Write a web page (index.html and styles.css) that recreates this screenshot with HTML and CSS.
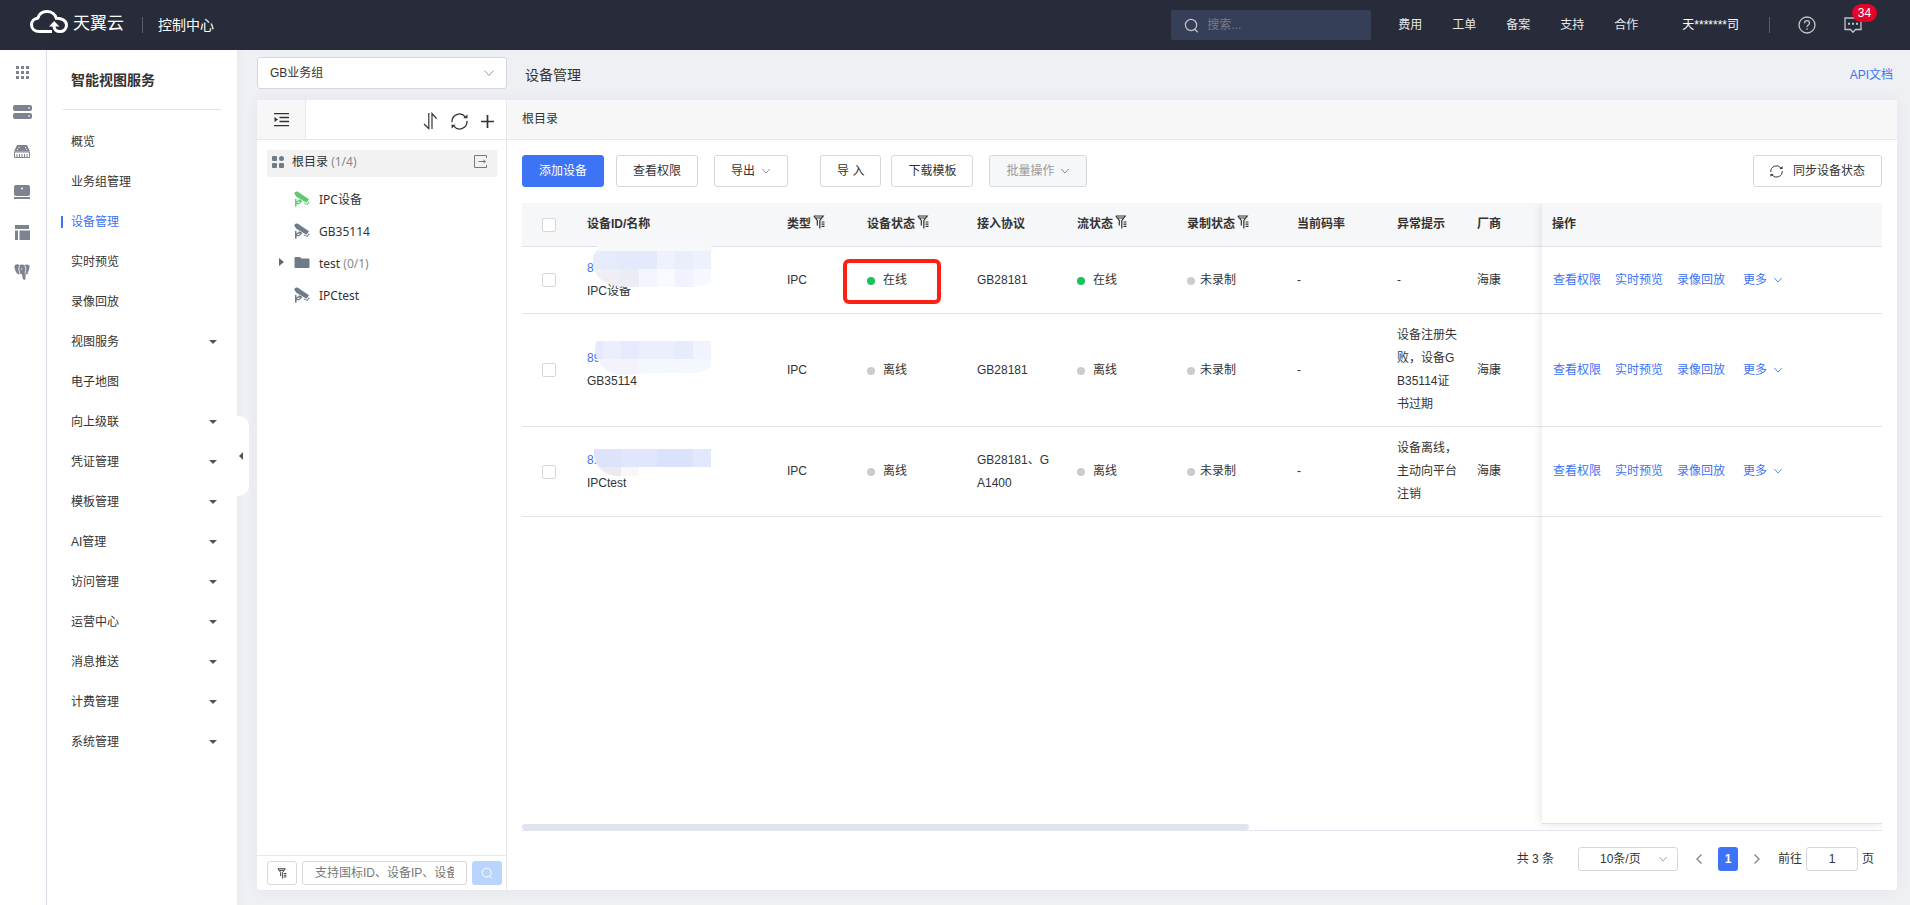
FILE: index.html
```html
<!DOCTYPE html>
<html lang="zh-CN">
<head>
    <meta charset="UTF-8">
    <meta name="viewport" content="width=device-width, initial-scale=1.0">
    <title>设备管理 - 智能视图服务</title>
    <link rel="stylesheet" href="styles.css">
</head>
<body>

<!-- 公用图标 -->
<svg class="symbols" aria-hidden="true">
    <symbol id="i-down" viewBox="0 0 12 12"><path d="M1.5 3.5 6 8.5l4.5-5" fill="none" stroke="currentColor"/></symbol>
    <symbol id="i-search" viewBox="0 0 16 16"><g fill="none" stroke="currentColor" stroke-width="1.3"><circle cx="7.5" cy="7.5" r="6"/><path d="m11.5 12 3.2 3.2"/></g></symbol>
    <symbol id="i-refresh" viewBox="0 0 16 16"><g fill="none" stroke="currentColor" stroke-width="1.2"><path d="M1 8.600A7 7 0 0 1 13.400 3.600M15 7.400A7 7 0 0 1 2.600 12.400"/></g><path d="M11.500 5h4V1.500zM4.500 11h-4v3.500z" fill="currentColor"/></symbol>
    <symbol id="i-filter" viewBox="0 0 12 14"><path d="M.8 1h9.400L6.800 5.500v8M.8 1l3.500 4.500V10.500M2.500 3h6M8.500 7h3M8.500 9.200h3M8.500 11.400h3" fill="none" stroke="currentColor" stroke-width="1.200"/></symbol>
    <symbol id="i-camera" viewBox="0 0 16 16"><g fill="currentColor"><circle cx="2.500" cy="2.500" r="2"/><path d="M.6 2 3.500.6 15 8.200l-2.500 3.600L2 5.600z"/><path d="M1 8h1.500v2.600L5.500 8.200 8.500 10l-3.200 3.200H2.500v2.500H1zM9.500 12.200l.6-.8 2.800 1.500 2-2.600.8.600-2.400 3.200z"/></g><path d="M3.800 10.800h2.600L4.800 12H3.200z" fill="#fff"/></symbol>
</svg>

<header class="topbar">
    <a class="logo" href="#">
        <svg width="38" height="24" viewBox="0 0 38 24">
            <path d="M22 21.500H9.500C4.500 21.500 1.500 18.500 1.500 14.800c0-3.600 2.600-6.300 6.300-6.600C9 4.300 12.600 1.600 17 1.600c4.500 0 8.300 2.700 9.300 6.700 5.700-.2 10.200 2.500 10.200 7 0 3.600-2.900 6.300-6.600 6.300-3.500 0-5.900-2.200-5.900-5.600" fill="none" stroke="#fff" stroke-width="3"/>
            <path d="M19 16.500 24.200 11l5.200 5.500z" fill="#fff"/>
        </svg>
        <span>天翼云</span>
    </a>
    <span class="split"></span>
    <span class="console-name">控制中心</span>

    <label class="top-search">
        <svg width="15" height="15"><use href="#i-search"/></svg>
        <input type="text" placeholder="搜索..." aria-label="搜索">
    </label>
    <nav class="top-nav">
        <a href="#">费用</a>
        <a href="#">工单</a>
        <a href="#">备案</a>
        <a href="#">支持</a>
        <a href="#">合作</a>
    </nav>
    <a class="account" href="#">天*******司</a>
    <span class="split"></span>
    <button class="top-icon" aria-label="帮助">
        <svg width="18" height="18" viewBox="0 0 18 18" fill="none" stroke="#c3c5cb" stroke-width="1.300"><circle cx="9" cy="9" r="8"/><path d="M6.500 7.200C6.500 5.600 7.600 4.700 9 4.700s2.500.9 2.500 2.300c0 1.800-2.500 2-2.500 4M9 12.300v1.500"/></svg>
    </button>
    <button class="top-icon message" aria-label="消息">
        <svg width="18" height="18" viewBox="0 0 18 18" fill="none" stroke="#c3c5cb" stroke-width="1.300"><path d="M1 2h16v11.500h-5.500L9 16.200l-2.500-2.700H1z"/><path d="M4 7.800h2M8 7.800h2M12 7.800h2" stroke-width="2"/></svg>
        <span class="badge">34</span>
    </button>
</header>

<div class="layout">
    <nav class="rail" aria-label="产品">
        <a href="#" aria-label="全部产品"><svg width="13" height="13" viewBox="0 0 13 13"><path d="M0 0h3v3H0zM5 0h3v3H5zM10 0h3v3h-3zM0 5h3v3H0zM5 5h3v3H5zM10 5h3v3h-3zM0 10h3v3H0zM5 10h3v3H5zM10 10h3v3h-3z"/></svg></a>
        <a href="#" aria-label="云主机"><svg width="19" height="14" viewBox="0 0 19 14"><rect width="19" height="6" rx="2"/><rect y="8" width="19" height="6" rx="2"/><path d="M15 2.500h2v1h-2zM15 10.500h2v1h-2z" fill="#fff"/></svg></a>
        <a href="#" aria-label="云硬盘"><svg width="18" height="14" viewBox="0 0 18 14"><path d="M4 0h10l3 6.500H1z"/><path d="M1.500 7h15v5.500h-15z" fill="none" stroke="#7e848f"/><path d="M4 9v3M6.500 9v3M9 9v3M11.500 9v3M14 9v3" stroke="#7e848f"/><path d="M5.500 2.500h1M12 2.500h1M4 4.500h1M13 4.500h1" stroke="#fff"/></svg></a>
        <a href="#" aria-label="物理机"><svg width="16" height="14" viewBox="0 0 16 14"><rect width="16" height="11" rx="2"/><path d="M0 12h16v2H0z"/><circle cx="8" cy="3.500" r="1" fill="#fff"/></svg></a>
        <a href="#" aria-label="控制台"><svg width="16" height="15" viewBox="0 0 16 15"><path d="M1 0h14v4H1zM1 5.500h3V15H1zM5.500 5.500H16V15H5.500z"/></svg></a>
        <a href="#" aria-label="数据库"><svg width="16" height="16" viewBox="0 0 16 16"><path d="M1 1Q3-.3 5.500 1 8-.2 10.500 1 13-.2 15.500 1.500q.5 4-2 7.500l1.500.5-3.500.8v5Q10 16.500 8.800 15L8 10.500 6 9.500 4.500 10.500Q1.500 9 .3 3z"/><path d="M5.500 1.500Q4 5 5.800 9.500M10.800 1.500q2 3.500.2 8M7 5h1.500" fill="none" stroke="#fff" stroke-width=".8"/></svg></a>
    </nav>

    <aside class="sidebar">
        <h2>智能视图服务</h2>
        <ul class="menu">
            <li><a href="#">概览</a></li>
            <li><a href="#">业务组管理</a></li>
            <li><a class="active" href="#">设备管理</a></li>
            <li><a href="#">实时预览</a></li>
            <li><a href="#">录像回放</a></li>
            <li><a class="has-sub" href="#">视图服务</a></li>
            <li><a href="#">电子地图</a></li>
            <li><a class="has-sub" href="#">向上级联</a></li>
            <li><a class="has-sub" href="#">凭证管理</a></li>
            <li><a class="has-sub" href="#">模板管理</a></li>
            <li><a class="has-sub" href="#">AI管理</a></li>
            <li><a class="has-sub" href="#">访问管理</a></li>
            <li><a class="has-sub" href="#">运营中心</a></li>
            <li><a class="has-sub" href="#">消息推送</a></li>
            <li><a class="has-sub" href="#">计费管理</a></li>
            <li><a class="has-sub" href="#">系统管理</a></li>
        </ul>
        <button class="collapse" aria-label="收起菜单"></button>
    </aside>

    <main class="content">
        <div class="page-head">
            <div class="select group-select">
                <select aria-label="业务组"><option>GB业务组</option></select>
                <svg width="12" height="12"><use href="#i-down"/></svg>
            </div>
            <h1>设备管理</h1>
            <a class="api-link" href="#">API文档</a>
        </div>

        <div class="card">
            <section class="tree-panel">
                <div class="tree-bar">
                    <button class="fold" aria-label="收起目录"><svg width="15" height="14" viewBox="0 0 15 14"><path d="M0 .7h15M5.500 4.500H15M5.500 8.500H15M0 12.700h15" stroke="#333" stroke-width="1.300"/><path d="M.5 4v5L4 6.500z" fill="#333"/></svg></button>
                    <div class="tree-tools">
                        <button aria-label="排序"><svg width="15" height="18" viewBox="0 0 15 18" fill="none" stroke="#333" stroke-width="1.200"><path d="M1 12l4.800 4.500V1M9 17V1.500L13.500 6.500"/></svg></button>
                        <button aria-label="刷新"><svg width="17" height="17"><use href="#i-refresh"/></svg></button>
                        <button aria-label="新增"><svg width="13" height="13" viewBox="0 0 13 13"><path d="M6.500 0v13M0 6.500h13" stroke="#333" stroke-width="1.700"/></svg></button>
                    </div>
                </div>
                <div class="tree">
                    <div class="tree-root">
                        <svg width="12" height="12" viewBox="0 0 12 12" fill="#6e7c89"><rect width="5" height="5" rx="1"/><circle cx="9.500" cy="2.500" r="2.500"/><rect y="7" width="5" height="5" rx="1"/><rect x="7" y="7" width="5" height="5" rx="1"/></svg>
                        <span>根目录 <em>(1/4)</em></span>
                        <svg class="export" width="13" height="13" viewBox="0 0 13 13" fill="none" stroke="#6e7c89"><path d="M12.500 3V.5H.5v12h12V10M4.500 6.500h6"/><path d="M9.500 4.500 12 6.500l-2.500 2z" fill="#6e7c89" stroke="none"/></svg>
                    </div>
                    <ul>
                        <li><svg class="online" width="16" height="16"><use href="#i-camera"/></svg>IPC设备</li>
                        <li><svg width="16" height="16"><use href="#i-camera"/></svg>GB35114</li>
                        <li class="folder"><svg width="16" height="16" viewBox="0 0 16 16"><path d="M.5 3q0-1 1-1h4.500l1.500 1.500H14.500q1 0 1 1V12q0 1-1 1h-13q-1 0-1-1z" fill="currentColor"/></svg>test <em>(0/1)</em></li>
                        <li><svg width="16" height="16"><use href="#i-camera"/></svg>IPCtest</li>
                    </ul>
                </div>
                <div class="tree-search">
                    <button class="square" aria-label="筛选"><svg width="10" height="11"><use href="#i-filter"/></svg></button>
                    <input type="text" placeholder="支持国标ID、设备IP、设备名称" aria-label="搜索设备">
                    <button class="square go" aria-label="查询"><svg width="12" height="12"><use href="#i-search"/></svg></button>
                </div>
            </section>

            <section class="device-panel">
                <div class="crumb">根目录</div>
                <div class="device-body">
                    <div class="toolbar">
                        <button class="btn primary">添加设备</button>
                        <button class="btn">查看权限</button>
                        <button class="btn drop">导出<svg width="10" height="10"><use href="#i-down"/></svg></button>
                        <button class="btn import">导 入</button>
                        <button class="btn">下载模板</button>
                        <button class="btn drop" disabled>批量操作<svg width="10" height="10"><use href="#i-down"/></svg></button>
                        <button class="btn sync"><svg width="13" height="13"><use href="#i-refresh"/></svg>同步设备状态</button>
                    </div>

                    <div class="table-wrap">
                        <table>
                            <colgroup>
                                <col class="w-check"><col><col class="w-80"><col class="w-110"><col class="w-100"><col class="w-110"><col class="w-110"><col class="w-100"><col class="w-80"><col class="w-75"><col class="w-action">
                            </colgroup>
                            <thead>
                                <tr>
                                    <th class="check"><input type="checkbox" aria-label="全选"></th>
                                    <th>设备ID/名称</th>
                                    <th>类型<svg width="12" height="14"><use href="#i-filter"/></svg></th>
                                    <th>设备状态<svg width="12" height="14"><use href="#i-filter"/></svg></th>
                                    <th>接入协议</th>
                                    <th>流状态<svg width="12" height="14"><use href="#i-filter"/></svg></th>
                                    <th>录制状态<svg width="12" height="14"><use href="#i-filter"/></svg></th>
                                    <th>当前码率</th>
                                    <th>异常提示</th>
                                    <th>厂商</th>
                                    <th>操作</th>
                                </tr>
                            </thead>
                            <tbody>
                                <tr>
                                    <td class="check"><input type="checkbox" aria-label="选择 IPC设备"></td>
                                    <td>
                                        <div class="name">
                                            <a href="#">8</a><br>IPC设备
                                            <svg class="mask" width="122" height="42" viewBox="0 0 122 42">
                                                <path d="M5 0h113v2l3 4H3z" fill="#f7f8fa"/>
                                                <clipPath id="m1"><path d="M3 6h115v31q-7 4-17 5H32Q-2 40 0 12z"/></clipPath>
                                                <g clip-path="url(#m1)">
                                                    <path d="M0 6h10v18H0z" fill="#e5edfd"/><path d="M10 6h18v18H10z" fill="#e6ebfc"/><path d="M28 6h36v18H28z" fill="#e4eafc"/><path d="M64 6h18v18H64z" fill="#f0f1fe"/><path d="M82 6h18v18H82z" fill="#e9eefd"/><path d="M100 6h18v18h-18z" fill="#edf0fd"/>
                                                    <path d="M0 24h28v18H0z" fill="#eeeff6"/><path d="M28 24h18v18H28z" fill="#ebedf5"/><path d="M46 24h18v18H46z" fill="#f3f6ff"/><path d="M64 24h18v18H64z" fill="#f8faff"/><path d="M82 24h18v18H82z" fill="#f0f3ff"/><path d="M100 24h18v18h-18z" fill="#f6f8ff"/>
                                                </g>
                                            </svg>
                                        </div>
                                    </td>
                                    <td>IPC</td>
                                    <td class="marked"><span class="dot on"></span>在线</td>
                                    <td>GB28181</td>
                                    <td><span class="dot on"></span>在线</td>
                                    <td><span class="dot near"></span>未录制</td>
                                    <td>-</td>
                                    <td>-</td>
                                    <td>海康</td>
                                    <td class="actions"><a href="#">查看权限</a><a href="#">实时预览</a><a href="#">录像回放</a><a class="more" href="#">更多<svg width="10" height="10"><use href="#i-down"/></svg></a></td>
                                </tr>
                                <tr>
                                    <td class="check"><input type="checkbox" aria-label="选择 GB35114"></td>
                                    <td>
                                        <div class="name">
                                            <a href="#">89</a><br>GB35114
                                            <svg class="mask" width="122" height="42" viewBox="0 0 122 42">
                                                <clipPath id="m2"><path d="M4 6h114v26q-10 6-20 6-30-1-56 1-28 5-38-15-4-10 0-18z"/></clipPath>
                                                <g clip-path="url(#m2)">
                                                    <path d="M0 6h10v18H0z" fill="#e4e9fd"/><path d="M10 6h18v18H10z" fill="#ebeefd"/><path d="M28 6h18v18H28z" fill="#e6eafc"/><path d="M46 6h36v18H46z" fill="#ebeffd"/><path d="M82 6h18v18H82z" fill="#e6ecfc"/><path d="M100 6h18v18h-18z" fill="#f1f4ff"/>
                                                    <path d="M0 24h46v18H0z" fill="#f3f4fb"/><path d="M46 24h72v18H46z" fill="#f5f7ff"/>
                                                </g>
                                            </svg>
                                        </div>
                                    </td>
                                    <td>IPC</td>
                                    <td><span class="dot"></span>离线</td>
                                    <td>GB28181</td>
                                    <td><span class="dot"></span>离线</td>
                                    <td><span class="dot near"></span>未录制</td>
                                    <td>-</td>
                                    <td>设备注册失败，设备GB35114证书过期</td>
                                    <td>海康</td>
                                    <td class="actions"><a href="#">查看权限</a><a href="#">实时预览</a><a href="#">录像回放</a><a class="more" href="#">更多<svg width="10" height="10"><use href="#i-down"/></svg></a></td>
                                </tr>
                                <tr>
                                    <td class="check"><input type="checkbox" aria-label="选择 IPCtest"></td>
                                    <td>
                                        <div class="name">
                                            <a href="#">8.</a><br>IPCtest
                                            <svg class="mask" width="122" height="42" viewBox="0 0 122 42">
                                                <clipPath id="m3"><path d="M1 12h117v18H46v9H24Q4 37 1 18z"/></clipPath>
                                                <g clip-path="url(#m3)">
                                                    <path d="M0 12h28v18H0z" fill="#dde3fb"/><path d="M28 12h36v18H28z" fill="#e0e6fc"/><path d="M64 12h36v18H64z" fill="#dbe2fc"/><path d="M100 12h18v18h-18z" fill="#e2e8fd"/>
                                                    <path d="M0 30h28v10H0z" fill="#ebebed"/><path d="M28 30h18v10H28z" fill="#f8f8f9"/>
                                                </g>
                                            </svg>
                                        </div>
                                    </td>
                                    <td>IPC</td>
                                    <td><span class="dot"></span>离线</td>
                                    <td>GB28181、GA1400</td>
                                    <td><span class="dot"></span>离线</td>
                                    <td><span class="dot near"></span>未录制</td>
                                    <td>-</td>
                                    <td>设备离线，主动向平台注销</td>
                                    <td>海康</td>
                                    <td class="actions"><a href="#">查看权限</a><a href="#">实时预览</a><a href="#">录像回放</a><a class="more" href="#">更多<svg width="10" height="10"><use href="#i-down"/></svg></a></td>
                                </tr>
                            </tbody>
                        </table>
                        <div class="fixed-shadow"></div>
                        <div class="scrollbar"></div>
                    </div>

                    <div class="pager">
                        <span class="total">共 3 条</span>
                        <div class="select size-select">
                            <select aria-label="每页条数"><option>10条/页</option></select>
                            <svg width="10" height="10"><use href="#i-down"/></svg>
                        </div>
                        <button class="arrow" aria-label="上一页"><svg width="8" height="12" viewBox="0 0 8 12"><path d="M6.500 1.500 2 6l4.500 4.500" fill="none" stroke="#888" stroke-width="1.400"/></svg></button>
                        <button class="current">1</button>
                        <button class="arrow" aria-label="下一页"><svg width="8" height="12" viewBox="0 0 8 12"><path d="M1.500 1.500 6 6l-4.500 4.500" fill="none" stroke="#888" stroke-width="1.400"/></svg></button>
                        <label>前往<input type="text" value="1">页</label>
                    </div>
                </div>
            </section>
        </div>
    </main>
</div>

</body>
</html>
```
FILE: styles.css
```css
*, *::before, *::after {
    box-sizing: border-box;
}
body {
    margin: 0;
    height: 100vh;
    display: flex;
    flex-direction: column;
    font-family: "Liberation Sans", "Noto Sans CJK SC", sans-serif;
    font-size: 12px;
    line-height: 16px;
    color: #333;
    background-color: #eff0f4;
}
a {
    color: #3d73f5;
    text-decoration: none;
}
button, input, select {
    font: inherit;
    color: inherit;
    margin: 0;
}
button {
    padding: 0;
    border: 0;
    background: none;
    cursor: pointer;
}
ul {
    list-style: none;
    margin: 0;
    padding: 0;
}
em {
    font-style: normal;
    color: #888;
}
svg {
    flex: none;
}
.symbols {
    position: absolute;
    width: 0;
    height: 0;
}

/* 顶部导航 */
.topbar {
    height: 50px;
    flex: none;
    display: flex;
    align-items: center;
    padding: 0 48px 0 30px;
    background-color: #272b3a;
    color: #fff;
}
.logo {
    display: flex;
    align-items: center;
    gap: 5px;
    margin-right: 18px;
    padding-bottom: 6px;
    font-size: 17px;
    line-height: 24px;
    color: #fff;
}
.logo span {
    padding-top: 4px;
}
.split {
    width: 1px;
    height: 16px;
    background-color: #5b5e69;
}
.console-name {
    margin-left: 15px;
    font-size: 14px;
}
.top-search {
    display: flex;
    align-items: center;
    gap: 6px;
    width: 200px;
    height: 30px;
    margin-left: auto;
    padding-left: 13px;
    border-radius: 2px;
    background-color: #363f58;
    color: #c3c5cb;
}
.top-search input {
    width: 150px;
    border: 0;
    outline: 0;
    background: none;
}
.top-search input::placeholder {
    color: #777b86;
}
.top-nav {
    display: flex;
    gap: 30px;
    margin: 0 44px 0 27px;
}
.top-nav a {
    color: #e6e7ea;
}
.account {
    margin-right: 30px;
    color: #fff;
}
.top-icon {
    position: relative;
    width: 18px;
    height: 18px;
    margin-left: 28px;
}
.top-icon svg {
    display: block;
}
.badge {
    position: absolute;
    left: 8px;
    top: -12px;
    width: 25px;
    height: 18px;
    border-radius: 9px;
    background-color: #e3042b;
    color: #fff;
    line-height: 18px;
    text-align: center;
}

/* 左侧菜单 */
.layout {
    flex: 1;
    min-height: 0;
    display: flex;
}
.rail {
    width: 47px;
    flex: none;
    padding-top: 2px;
    border-right: 1px solid #dfe1e9;
    background-color: #fff;
}
.rail a {
    display: flex;
    align-items: center;
    justify-content: center;
    width: 44px;
    height: 40px;
}
.rail svg {
    fill: #7e848f;
}
.sidebar {
    position: relative;
    width: 190px;
    flex: none;
    padding: 0 16px;
    background-color: #fff;
    box-shadow: 0 0 10px rgba(30, 50, 90, 0.06);
}
.sidebar h2 {
    margin: 0;
    padding: 1px 0 0 8px;
    font-size: 14px;
    line-height: 58px;
    border-bottom: 1px solid #dfe1ec;
}
.menu {
    padding-top: 12px;
}
.menu a {
    position: relative;
    display: flex;
    align-items: center;
    justify-content: space-between;
    height: 40px;
    padding: 0 4px 0 8px;
    color: #333;
}
.menu .active {
    color: #3d73f5;
}
.menu .active::before {
    content: "";
    position: absolute;
    left: -2px;
    width: 2px;
    height: 12px;
    background-color: #3d73f5;
}
.has-sub::after {
    content: "";
    border: 4px solid transparent;
    border-top-color: #555;
    border-bottom: 0;
}
.collapse {
    position: absolute;
    left: 100%;
    top: 366px;
    width: 12px;
    height: 80px;
    border-radius: 0 10px 10px 0;
    background-color: #fff;
}
.collapse::before {
    content: "";
    display: block;
    width: 0;
    margin-left: 2px;
    border: 4px solid transparent;
    border-right-color: #555;
    border-left: 0;
}

/* 页面标题 */
.content {
    flex: 1;
    min-width: 0;
    display: flex;
    flex-direction: column;
    padding: 7px 13px 15px 20px;
}
.page-head {
    display: flex;
    align-items: center;
    margin-bottom: 11px;
}
.page-head h1 {
    margin: 0;
    padding: 4px 0 0 18px;
    font-size: 14px;
    font-weight: normal;
    line-height: 16px;
}
.api-link {
    margin-left: auto;
    padding: 4px 4px 0 0;
}
.select {
    position: relative;
}
.select select {
    appearance: none;
    width: 100%;
    height: 100%;
    border: 1px solid #d5d7dc;
    border-radius: 3px;
    outline: 0;
    background-color: #fff;
}
.select svg {
    position: absolute;
    right: 12px;
    top: 50%;
    margin-top: -6px;
    color: #999;
    pointer-events: none;
}
.group-select {
    width: 250px;
    height: 32px;
}
.group-select select {
    padding: 0 12px;
}

.card {
    flex: 1;
    min-height: 0;
    display: flex;
    border-radius: 3px;
    background-color: #fff;
    box-shadow: 0 0 15px rgba(30, 50, 90, 0.06);
}

/* 目录树 */
.tree-panel {
    width: 250px;
    flex: none;
    display: flex;
    flex-direction: column;
    border-right: 1px solid #e8e8ea;
}
.tree-bar {
    display: flex;
    height: 40px;
    border-bottom: 1px solid #e8e8ea;
}
.fold {
    display: flex;
    align-items: center;
    justify-content: center;
    width: 49px;
    border-right: 1px solid #e8e8ea;
    background-color: #f7f7f7;
}
.tree-tools {
    display: flex;
    align-items: center;
    gap: 13px;
    margin-left: auto;
    padding: 3px 12px 0 0;
}
.tree-tools button {
    display: flex;
}
.tree {
    flex: 1;
    padding: 10px 9px 0 10px;
    font-family: "Noto Sans", "Noto Sans CJK SC", sans-serif;
}
.tree-root {
    display: flex;
    align-items: center;
    height: 27px;
    padding: 0 10px 4px 5px;
    background-color: #f2f2f2;
}
.tree-root span {
    margin-left: 8px;
}
.export {
    margin-left: auto;
}
.tree ul {
    padding-top: 7px;
}
.tree li {
    position: relative;
    display: flex;
    align-items: center;
    height: 32px;
    padding-left: 27px;
    white-space: pre;
}
.tree li svg {
    margin: 0 9px 2px 0;
    color: #6e7c89;
}
.tree li svg.online {
    color: #5fcb71;
}
.folder::before {
    content: "";
    position: absolute;
    left: 12px;
    top: 10px;
    border: 4px solid transparent;
    border-left: 5px solid #5d6a76;
    border-right: 0;
}
.tree-search {
    display: flex;
    gap: 5px;
    padding: 5px 4px 5px 10px;
    border-top: 1px solid #e8e8ea;
}
.square {
    display: flex;
    align-items: center;
    justify-content: center;
    width: 30px;
    height: 24px;
    border: 1px solid #d5d7dc;
    border-radius: 3px;
}
.square.go {
    border: 0;
    background-color: #b9d5ff;
    color: #fff;
}
.tree-search input {
    flex: 1;
    min-width: 0;
    height: 24px;
    padding: 0 12px;
    border: 1px solid #d5d7dc;
    border-radius: 3px;
    outline: 0;
}
.tree-search input::placeholder {
    color: #777;
}

/* 设备列表 */
.device-panel {
    flex: 1;
    min-width: 0;
    display: flex;
    flex-direction: column;
}
.crumb {
    height: 40px;
    padding-left: 15px;
    line-height: 39px;
    border-bottom: 1px solid #e8e8ea;
    background-color: #f7f7f7;
}
.device-body {
    flex: 1;
    min-height: 0;
    display: flex;
    flex-direction: column;
    padding: 15px 15px 19px;
}
.toolbar {
    display: flex;
    margin-bottom: 16px;
}
.btn {
    display: flex;
    align-items: center;
    height: 32px;
    padding: 0 16px;
    margin-right: 12px;
    border: 1px solid #d5d7dc;
    border-radius: 3px;
    background-color: #fff;
    white-space: nowrap;
}
.btn.primary {
    border-color: #3d73f5;
    background-color: #3d73f5;
    color: #fff;
}
.btn.drop {
    margin-left: 4px;
}
.btn.drop svg {
    margin-left: 6px;
    color: #777;
}
.btn.import {
    margin: 0 10px 0 20px;
}
.btn:disabled {
    background-color: #f6f7f9;
    color: #999;
    cursor: default;
}
.btn.sync {
    margin: 0 0 0 auto;
}
.btn.sync svg {
    margin-right: 10px;
}
.table-wrap {
    position: relative;
    flex: 1;
    overflow: hidden;
    border-bottom: 1px solid #e1e4ec;
}
table {
    width: 100%;
    table-layout: fixed;
    border-collapse: separate;
    border-spacing: 0;
    line-height: 23px;
}
.w-check { width: 55px; }
.w-75 { width: 75px; }
.w-80 { width: 80px; }
.w-100 { width: 100px; }
.w-110 { width: 110px; }
.w-action { width: 340px; }
th, td {
    padding: 10px;
    border-bottom: 1px solid #e1e2ec;
    text-align: left;
    vertical-align: middle;
    word-break: break-all;
}
th {
    height: 44px;
    padding: 0 10px;
    background-color: #f6f7f9;
    font-weight: 600;
    white-space: nowrap;
}
th svg {
    margin-left: 2px;
    vertical-align: -1px;
}
.check {
    padding-left: 20px;
}
.check input {
    appearance: none;
    display: block;
    width: 14px;
    height: 14px;
    border: 1px solid #d5d7dc;
    border-radius: 2px;
    background-color: #fff;
}
.name {
    position: relative;
}
.mask {
    position: absolute;
    left: 6px;
    top: -12px;
}
.dot {
    display: inline-block;
    width: 8px;
    height: 8px;
    margin-right: 8px;
    border-radius: 50%;
    background-color: #ccc;
    vertical-align: -1px;
}
.dot.near {
    margin-right: 5px;
}
.dot.on {
    background-color: #18c45b;
}
.marked {
    position: relative;
}
/* 红框标注 */
.marked::after {
    content: "";
    position: absolute;
    left: -14px;
    top: 12px;
    width: 98px;
    height: 45px;
    border: 4px solid #fe2012;
    border-radius: 6px;
}
.actions {
    padding-left: 11px;
    white-space: nowrap;
}
.actions a {
    margin-right: 14px;
}
.actions .more {
    margin-left: 4px;
}
.actions svg {
    margin-left: 6px;
    vertical-align: -1px;
}
.fixed-shadow {
    position: absolute;
    right: 0;
    top: 0;
    bottom: 6px;
    width: 340px;
    border-bottom: 1px solid #dfe1ec;
    box-shadow: 0 0 10px rgba(0, 0, 0, 0.12);
    pointer-events: none;
}
.scrollbar {
    position: absolute;
    left: 0;
    bottom: 0;
    width: 727px;
    height: 6px;
    border-radius: 3px;
    background-color: #e1e4ec;
}

/* 分页 */
.pager {
    display: flex;
    align-items: center;
    justify-content: flex-end;
    margin-top: 16px;
    padding-right: 8px;
}
.size-select {
    width: 100px;
    height: 24px;
    margin: 0 16px 0 24px;
}
.size-select select {
    padding: 0 21px;
}
.size-select svg {
    right: 10px;
    margin-top: -5px;
}
.arrow {
    display: flex;
    align-items: center;
    justify-content: center;
    width: 10px;
    height: 24px;
}
.current {
    width: 20px;
    height: 24px;
    margin: 0 14px;
    border-radius: 3px;
    background-color: #3d73f5;
    color: #fff;
    font-weight: bold;
}
.pager label {
    display: flex;
    align-items: center;
    gap: 4px;
    margin-left: 16px;
}
.pager input {
    width: 52px;
    height: 24px;
    border: 1px solid #d5d7dc;
    border-radius: 3px;
    text-align: center;
}
```
